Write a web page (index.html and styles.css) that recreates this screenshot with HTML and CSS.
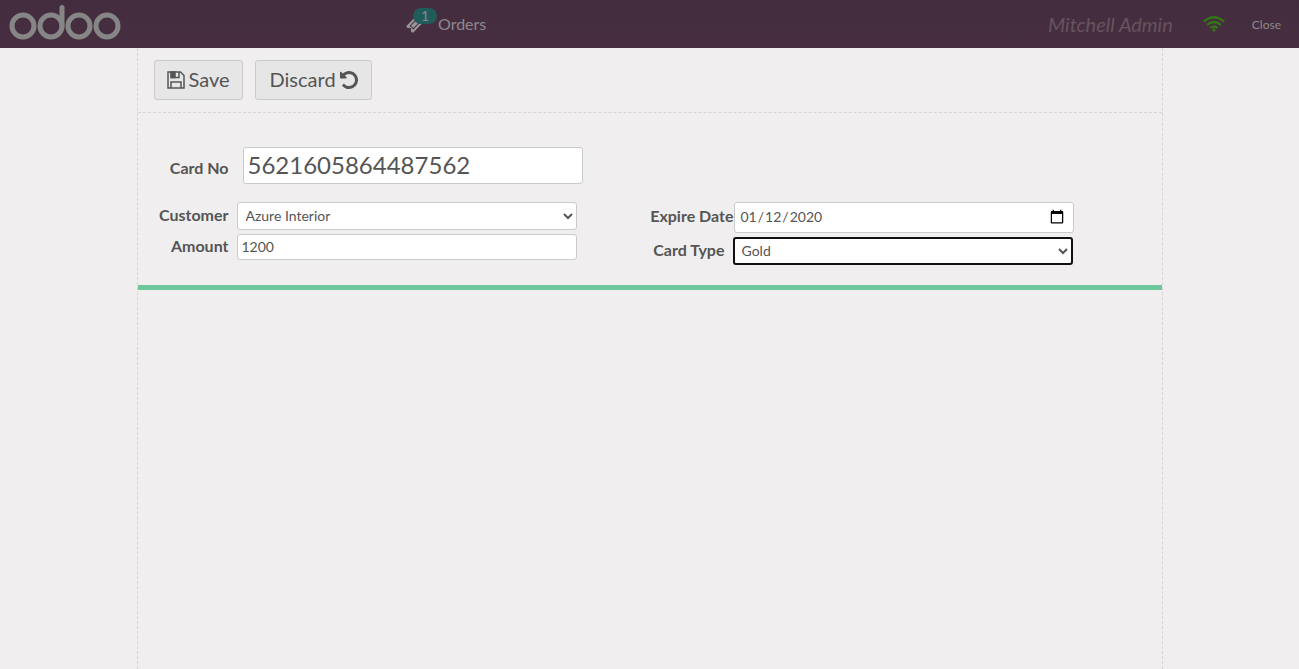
FILE: index.html
```html
<!DOCTYPE html>
<html lang="en">
<head>
<meta charset="utf-8">
<title>Gift card</title>
<link rel="stylesheet" href="styles.css">
</head>
<body>
<header class="topbar">
  <svg class="logo" viewBox="0 0 114 38" role="img" aria-label="odoo">
    <circle cx="14" cy="22" r="11"/><circle cx="42" cy="22" r="11"/><circle cx="70" cy="22" r="11"/><circle cx="98" cy="22" r="11"/>
    <path d="M53 3.500V22"/>
  </svg>
  <button class="orders" type="button">
    <span class="ticket">
      <svg class="ticket-icon" viewBox="0 0 1792 1792" aria-hidden="true"><path fill-rule="evenodd" d="M1702 794L795 1702q-37 37-90.500 37t-90.500-37l-126-126q56-56 56-136t-56-136-136-56-136 56L91 1178q-37-37-37-90.500T91 997L998 91q37-37 90.500-37T1179 91l125 125q-56 56-56 136t56 136 136 56 136-56l126 125q37 37 37 90.500t-37 90.500zM1024 380L380 1024l388 388 644-644zM1024 520l248 248-504 504-248-248z"/></svg>
      <span class="badge">1</span>
    </span>
    <span>Orders</span>
  </button>
  <div class="status">
    <span class="user">Mitchell Admin</span>
    <svg class="wifi" viewBox="0 0 22 16" role="img" aria-label="Connected">
      <path d="M.8 5.700Q11-3.200 21.200 5.700M4 8.900Q11 3 18 8.900M7.200 11.900Q11 9 14.800 11.900"/>
      <circle cx="11" cy="14" r="1.700"/>
    </svg>
    <button class="close" type="button">Close</button>
  </div>
</header>
<main class="panel">
  <div class="actions">
    <button class="btn btn-save" type="button">
      <svg class="save-icon" viewBox="0 0 18 18" aria-hidden="true"><path d="M1 1h12.500L17 4.500V17H1zM4 17v-6h10v6M4.500 1v5.500h7.500V1"/><path class="solid" d="M4 1h4v5.500H4z"/></svg>
      <span>Save</span>
    </button>
    <button class="btn btn-discard" type="button">
      <span>Discard</span>
      <svg class="undo-icon" viewBox="0 0 1536 1536" aria-hidden="true"><path d="M1536 768q0 156-61 298t-164 245-245 164-298 61q-172 0-327-72.500T177 1259q-7-10-6.500-22.500T179 1216l137-138q10-9 25-9 16 2 23 12 73 95 179 147t225 52q104 0 198.500-40.500T1130 1130t109.500-163.500T1280 768t-40.500-198.500T1130 406 966.500 296.500 768 256q-98 0-188 35.500T420 393l137 138q31 30 14 69-17 40-59 40H64q-26 0-45-19T0 576V128q0-42 40-59 39-17 69 14l130 129Q346 111 483.500 55.500T768 0q156 0 298 61t245 164 164 245 61 298z"/></svg>
    </button>
  </div>
  <form class="card-form">
    <div class="field number-field">
      <label for="card">Card No</label>
      <input class="control number" id="card" type="text" value="5621605864487562">
    </div>
    <div class="columns">
      <div class="column">
        <div class="field"><label for="customer">Customer</label>
          <select class="control select" id="customer"><option>Azure Interior</option></select></div>
        <div class="field"><label for="amount">Amount</label>
          <input class="control amount" id="amount" type="text" value="1200"></div>
      </div>
      <div class="column">
        <div class="field date-field"><label for="expire">Expire Date</label>
          <input class="control date" id="expire" type="date" value="2020-01-12"></div>
        <div class="field"><label for="type">Card Type</label>
          <select class="control select selected" id="type"><option>Gold</option></select></div>
      </div>
    </div>
  </form>
</main>
</body>
</html>
```
FILE: styles.css
```css
* {
  box-sizing: border-box;
}

body {
  margin: 0;
  min-height: 100vh;
  display: flex;
  flex-direction: column;
  background: #f0eeee;
  color: #555;
  font-family: Lato, sans-serif;
  font-size: 16px;
}

button,
input,
select {
  font-family: inherit;
  color: inherit;
}

.topbar {
  display: grid;
  grid-template-columns: 406px 1fr auto;
  align-items: center;
  height: 48px;
  padding-right: 18px;
  background: linear-gradient(#432c3d, #472f41);
}

.logo {
  width: 114px;
  height: 38px;
  margin: 0 0 3px 9px;
  fill: none;
  stroke: #868686;
  stroke-width: 5;
  stroke-linecap: round;
}

.orders,
.close {
  padding: 0;
  border: 0;
  background: none;
  color: #8f898d;
}

.orders {
  display: flex;
  align-items: center;
  justify-self: start;
  gap: 15px;
  padding-bottom: 2px;
  font-size: 16px;
}

.ticket {
  position: relative;
  display: flex;
}

.ticket-icon {
  width: 17px;
  height: 17px;
  margin-top: 3px;
  fill: #9a9598;
}

.badge {
  position: absolute;
  left: 7px;
  top: -5px;
  width: 24px;
  height: 16px;
  border-radius: 8px;
  background: #1f5c5a;
  font-size: 14px;
  line-height: 16px;
}

.status {
  display: flex;
  align-items: center;
}

.user {
  margin-right: 30px;
  color: #67545f;
  font-size: 20px;
  font-style: italic;
}

.wifi {
  width: 22px;
  height: 16px;
  margin-right: 27px;
  fill: #327518;
}

.wifi path {
  fill: none;
  stroke: #327518;
  stroke-width: 2.4;
}

.close {
  font-size: 12px;
}

.panel {
  flex: 1;
  width: 100%;
  max-width: 1026px;
  margin: 0 auto;
  border: dashed #d6d4d4;
  border-width: 0 1px;
}

.actions {
  display: flex;
  gap: 12px;
  padding: 12px 16px;
  border-bottom: 1px dashed #d6d4d4;
}

.btn {
  display: flex;
  align-items: center;
  gap: 4px;
  height: 40px;
  padding: 0 12px;
  border: 1px solid #cacaca;
  border-radius: 3px;
  background: #e6e6e6;
  font-size: 20px;
}

.btn span {
  padding-bottom: 2px;
}

.btn-discard {
  padding: 0 13px 0 14px;
}

.save-icon {
  width: 18px;
  height: 18px;
  fill: none;
  stroke: #555;
  stroke-width: 1.5;
}

.save-icon .solid,
.undo-icon {
  fill: #555;
}

.undo-icon {
  width: 18px;
  height: 18px;
}

.card-form {
  padding: 34px 0 20px;
  border-bottom: 5px solid #6ec89b;
}

.columns {
  display: grid;
  grid-template-columns: 496fr 528fr;
  margin-top: 18px;
}

.column {
  display: flex;
  flex-direction: column;
  gap: 4px;
}

.field {
  display: flex;
  align-items: center;
  gap: 8px;
}

.number-field {
  gap: 14px;
}

.date-field {
  gap: 0;
}

.field label {
  width: 91px;
  padding-bottom: 4px;
  text-align: right;
  font-weight: 700;
  white-space: nowrap;
}

.number-field label {
  padding: 3px 0 0;
}

.date-field label {
  width: 100px;
}

.control {
  width: 340px;
  padding: 0 4px 2px;
  border: 1px solid #cacaca;
  border-radius: 3px;
  background: #fff;
  font-size: 14px;
}

.select {
  height: 28px;
}

.selected {
  border: 2px solid #101010;
  padding: 0 3px 2px;
  outline: none;
}

.amount {
  height: 26px;
}

.date {
  height: 31px;
  padding: 0 8px 2px 5px;
}

.date::-webkit-calendar-picker-indicator {
  width: 16px;
  height: 16px;
  padding: 0;
}

.date::-webkit-datetime-edit-text {
  padding: 0;
}

.number {
  height: 37px;
  font-size: 24px;
}
```
